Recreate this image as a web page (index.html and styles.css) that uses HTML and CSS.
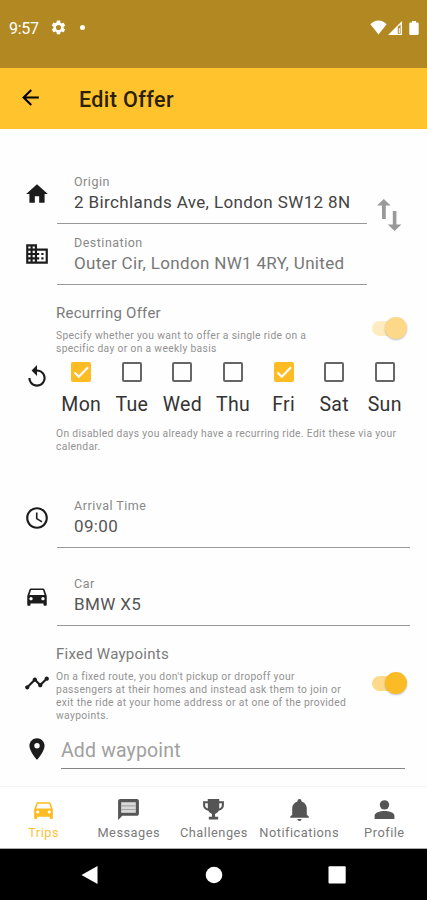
FILE: index.html
```html
<!DOCTYPE html>
<html lang="en">
<head>
  <meta charset="UTF-8" />
  <meta name="viewport" content="width=device-width, initial-scale=1" />
  <title>Edit Offer</title>
  <link rel="stylesheet" href="styles.css">
</head>
<body>

<div class="status-bar">
  <span class="clock">9:57</span>
  <svg class="gear" viewBox="0 0 24 24"><path d="M19.14 12.94c.04-.3.06-.61.06-.94s-.02-.64-.07-.94l2.03-1.58a.49.49 0 0 0 .12-.61l-1.92-3.32a.49.49 0 0 0-.59-.22l-2.39.96a7 7 0 0 0-1.62-.94l-.36-2.54A.48.48 0 0 0 13.92 2h-3.84a.47.47 0 0 0-.47.41l-.36 2.54c-.59.24-1.13.57-1.62.94l-2.39-.96a.48.48 0 0 0-.59.22L2.74 8.87a.48.48 0 0 0 .12.61l2.03 1.58a7 7 0 0 0 0 1.88l-2.03 1.58a.49.49 0 0 0-.12.61l1.92 3.32c.12.22.37.29.59.22l2.39-.96c.5.38 1.03.7 1.62.94l.36 2.54c.05.24.24.41.48.41h3.84c.24 0 .44-.17.47-.41l.36-2.54c.59-.24 1.13-.56 1.62-.94l2.39.96c.22.08.47 0 .59-.22l1.92-3.32a.47.47 0 0 0-.12-.61zM12 15.6a3.6 3.6 0 1 1 0-7.2 3.6 3.6 0 0 1 0 7.2z"/></svg>
  <span class="dot"></span>
  <span class="spacer"></span>
  <svg class="wifi" viewBox="0 0 17 15"><path d="M8.500 14.500L.4 4.200C2.500 1.700 5.400.4 8.500.4s6 1.300 8.100 3.800z"/></svg>
  <svg class="signal" viewBox="0 0 14 14"><path fill-rule="evenodd" d="M14 0v14H0zM9.800 6v6.800h2.800V3.500z"/><path d="M10.800 7h1v5h-1z"/></svg>
  <svg class="battery" viewBox="0 0 10 14"><path d="M3 0h4v1.500h1.500A1.200 1.200 0 0 1 9.700 2.700v10.100a1.200 1.200 0 0 1-1.200 1.200h-7A1.200 1.200 0 0 1 .3 12.800V2.700a1.200 1.200 0 0 1 1.200-1.200H3z"/></svg>
</div>

<header class="app-bar">
  <svg class="back" viewBox="0 0 24 24"><path d="M20 11H7.830l5.590-5.590L12 4l-8 8 8 8 1.410-1.410L7.830 13H20z"/></svg>
  <h1>Edit Offer</h1>
</header>

<main>
  <section class="route">
    <div class="route-fields">
      <div class="row origin">
        <svg class="icon" viewBox="0 0 24 24"><path d="M10 20v-6h4v6h5v-8h3L12 3 2 12h3v8z"/></svg>
        <div class="field">
          <span class="label">Origin</span>
          <span class="value">2 Birchlands Ave, London SW12 8N</span>
        </div>
      </div>
      <div class="row destination">
        <svg class="icon" viewBox="0 0 24 24"><path d="M12 7V3H2v18h20V7zM6 19H4v-2h2zm0-4H4v-2h2zm0-4H4V9h2zm0-4H4V5h2zm4 12H8v-2h2zm0-4H8v-2h2zm0-4H8V9h2zm0-4H8V5h2zm10 12h-8v-2h2v-2h-2v-2h2v-2h-2V9h8zm-2-8h-2v2h2zm0 4h-2v2h2z"/></svg>
        <div class="field">
          <span class="label">Destination</span>
          <span class="value">Outer Cir, London NW1 4RY, United</span>
        </div>
      </div>
    </div>
    <svg class="swap" viewBox="0 0 24 32"><path d="M5 20V6.500H0L6.800 0l6.800 6.500H8.800V20zM15.800 12v13.500h-5L17.600 32l6.800-6.500h-5V12z"/></svg>
  </section>

  <section class="row recurring">
    <svg class="icon" viewBox="0 0 24 24"><path d="M12 5V1L7 6l5 5V7c3.310 0 6 2.690 6 6s-2.690 6-6 6-6-2.690-6-6H4c0 4.420 3.580 8 8 8s8-3.580 8-8-3.580-8-8-8z"/></svg>
    <div class="body">
      <div class="option">
        <div class="option-text">
          <h2>Recurring Offer</h2>
          <p>Specify whether you want to offer a single ride on a<br>specific day or on a weekly basis</p>
        </div>
        <span class="switch disabled"></span>
      </div>
      <div class="days">
        <div class="day"><span class="box checked"><svg viewBox="0 0 20 20"><path d="M3.500 10.500l4.300 4.300L17 5.200"/></svg></span>Mon</div>
        <div class="day"><span class="box"></span>Tue</div>
        <div class="day"><span class="box"></span>Wed</div>
        <div class="day"><span class="box"></span>Thu</div>
        <div class="day"><span class="box checked"><svg viewBox="0 0 20 20"><path d="M3.500 10.500l4.300 4.300L17 5.200"/></svg></span>Fri</div>
        <div class="day"><span class="box"></span>Sat</div>
        <div class="day"><span class="box"></span>Sun</div>
      </div>
      <p class="hint">On disabled days you already have a recurring ride. Edit these via your<br>calendar.</p>
    </div>
  </section>

  <section class="row arrival">
    <svg class="icon" viewBox="0 0 24 24"><path d="M11.990 2C6.470 2 2 6.480 2 12s4.470 10 9.990 10C17.520 22 22 17.520 22 12S17.520 2 11.990 2zM12 20c-4.420 0-8-3.580-8-8s3.580-8 8-8 8 3.580 8 8-3.580 8-8 8zm.5-13H11v6l5.250 3.150.75-1.230-4.500-2.670z"/></svg>
    <div class="field">
      <span class="label">Arrival Time</span>
      <span class="value">09:00</span>
    </div>
  </section>

  <section class="row car">
    <svg class="icon" viewBox="0 0 24 24"><path d="M18.920 6.010C18.720 5.420 18.160 5 17.500 5h-11c-.66 0-1.210.42-1.420 1.010L3 12v8c0 .55.45 1 1 1h1c.55 0 1-.45 1-1v-1h12v1c0 .55.45 1 1 1h1c.55 0 1-.45 1-1v-8zM6.500 16c-.83 0-1.500-.67-1.500-1.500S5.670 13 6.500 13s1.500.67 1.500 1.500S7.330 16 6.500 16zm11 0c-.83 0-1.500-.67-1.500-1.500s.67-1.500 1.500-1.500 1.500.67 1.500 1.500-.67 1.500-1.500 1.500zM5 11l1.500-4.500h11L19 11z"/></svg>
    <div class="field">
      <span class="label">Car</span>
      <span class="value">BMW X5</span>
    </div>
  </section>

  <section class="row fixed">
    <svg class="icon" viewBox="0 0 24 24"><path d="M23 8c0 1.100-.9 2-2 2-.18 0-.35-.02-.51-.07l-3.560 3.550c.05.16.07.34.07.52 0 1.100-.9 2-2 2s-2-.9-2-2c0-.18.02-.36.07-.52l-2.550-2.550c-.16.05-.34.07-.52.07s-.36-.02-.52-.07l-4.550 4.560c.05.16.07.33.07.51 0 1.100-.9 2-2 2s-2-.9-2-2 .9-2 2-2c.18 0 .35.02.51.07l4.560-4.550C8.020 9.360 8 9.180 8 9c0-1.100.9-2 2-2s2 .9 2 2c0 .18-.02.36-.07.52l2.550 2.550c.16-.05.34-.07.52-.07s.36.02.52.07l3.550-3.560C19.020 8.350 19 8.180 19 8c0-1.100.9-2 2-2s2 .9 2 2z"/></svg>
    <div class="body option">
      <div class="option-text">
        <h2>Fixed Waypoints</h2>
        <p>On a fixed route, you don't pickup or dropoff your<br>passengers at their homes and instead ask them to join or<br>exit the ride at your home address or at one of the provided<br>waypoints.</p>
      </div>
      <span class="switch"></span>
    </div>
  </section>

  <section class="row waypoint">
    <svg class="icon" viewBox="0 0 24 24"><path d="M12 2C8.130 2 5 5.130 5 9c0 5.250 7 13 7 13s7-7.750 7-13c0-3.870-3.130-7-7-7zm0 9.500a2.500 2.500 0 0 1 0-5 2.500 2.500 0 0 1 0 5z"/></svg>
    <div class="add">Add waypoint</div>
  </section>
</main>

<nav class="tabs">
  <div class="tab active">
    <svg viewBox="0 0 24 24"><path d="M18.920 6.010C18.720 5.420 18.160 5 17.500 5h-11c-.66 0-1.210.42-1.420 1.010L3 12v8c0 .55.45 1 1 1h1c.55 0 1-.45 1-1v-1h12v1c0 .55.45 1 1 1h1c.55 0 1-.45 1-1v-8zM6.500 16c-.83 0-1.500-.67-1.500-1.500S5.670 13 6.500 13s1.500.67 1.500 1.500S7.330 16 6.500 16zm11 0c-.83 0-1.500-.67-1.500-1.500s.67-1.500 1.500-1.500 1.500.67 1.500 1.500-.67 1.500-1.500 1.500zM5 11l1.500-4.500h11L19 11z"/></svg>
    <span>Trips</span>
  </div>
  <div class="tab">
    <svg viewBox="0 0 24 24"><path class="tint" d="M5 5h14v10H5z"/><path d="M20 2H4c-1.100 0-2 .9-2 2v18l4-4h14c1.100 0 2-.9 2-2V4c0-1.100-.9-2-2-2zM5 5h14v10H5z" fill-rule="evenodd"/><path class="line" d="M5 8h14v1H5zm0 3.500h14v1H5z"/></svg>
    <span>Messages</span>
  </div>
  <div class="tab">
    <svg viewBox="0 0 24 24"><path d="M17.500 4V2h-11v2H2v4c0 2.700 2 4.800 5 5.300.8 1.500 2 2.500 3.500 2.900V19H7.500v2.500h9V19h-3v-2.800c1.500-.4 2.700-1.400 3.500-2.900 3-.5 5-2.600 5-5.300V4zM4 8V6h2.500v5C5 10.500 4 9.500 4 8zm16 0c0 1.500-1 2.500-2.500 3V6H20z"/></svg>
    <span>Challenges</span>
  </div>
  <div class="tab">
    <svg viewBox="0 0 24 24"><path d="M21 19v1H3v-1l2-2v-6c0-3.100 2.030-5.830 5-6.710V4a2 2 0 0 1 4 0v.29c2.970.88 5 3.610 5 6.710v6zm-7 2a2 2 0 0 1-4 0"/></svg>
    <span>Notifications</span>
  </div>
  <div class="tab">
    <svg viewBox="0 0 24 24"><circle cx="12" cy="7.500" r="4.500"/><path d="M2.500 21v-3c0-3 5-4.500 9.500-4.500s9.500 1.500 9.500 4.500v3z"/></svg>
    <span>Profile</span>
  </div>
</nav>

<footer class="system-nav">
  <svg viewBox="0 0 20 20"><path d="M17.500 1v18L1.500 10z"/></svg>
  <svg viewBox="0 0 20 20"><circle cx="10" cy="10" r="8.300"/></svg>
  <svg viewBox="0 0 20 20"><rect x="1.500" y="1.300" width="17.200" height="17.200" rx="1"/></svg>
</footer>

</body>
</html>
```
FILE: styles.css
```css
* {
  box-sizing: border-box;
}

body {
  margin: 0;
  height: 900px;
  display: flex;
  flex-direction: column;
  overflow: hidden;
  font-family: Roboto, "Liberation Sans", sans-serif;
  background: #fefefe;
  color: #333;
}

h1, h2, p {
  margin: 0;
  font-weight: 400;
}

svg {
  display: block;
  flex: none;
}

/* top bars */
.status-bar {
  height: 68px;
  padding: 0 8px 13px 9px;
  display: flex;
  align-items: center;
  background: #b28822;
  color: #fff;
  fill: #fff;
}

.clock {
  width: 41px;
  padding-top: 1px;
  font-size: 16px;
  letter-spacing: -0.3px;
}

.gear {
  width: 17px;
  height: 17px;
}

.dot {
  width: 5px;
  height: 5px;
  margin-left: 13px;
  border-radius: 50%;
  background: #fff;
}

.spacer {
  flex: 1;
}

.wifi {
  width: 17px;
  height: 15px;
}

.signal {
  width: 14px;
  height: 14px;
  margin-left: 1px;
}

.battery {
  width: 10px;
  height: 14px;
  margin-left: 7px;
}

.app-bar {
  height: 61px;
  padding-left: 18px;
  display: flex;
  align-items: center;
  background: #ffc32d;
}

.back {
  width: 25px;
  height: 25px;
  margin-top: -3px;
}

h1 {
  margin-left: 36px;
  padding-top: 1px;
  font-size: 21.5px;
  font-weight: 500;
  letter-spacing: 0.4px;
  color: #2a2006;
}

/* form */
main {
  flex: 1;
  padding-top: 41px;
}

.row {
  display: flex;
  padding-left: 24px;
}

.icon {
  width: 26px;
  height: 26px;
  margin-right: 7px;
  fill: #1c1c1c;
}

.field {
  flex: 1;
  height: 54px;
  padding: 4px 0 0 17px;
  display: flex;
  flex-direction: column;
  white-space: nowrap;
  border-bottom: 1px solid #999;
}

.label {
  font-size: 12.5px;
  line-height: 16px;
  letter-spacing: 0.5px;
  color: #888;
}

.value {
  margin-top: 1px;
  font-size: 17px;
  line-height: 22px;
  letter-spacing: 0.38px;
  color: #555;
}

.route {
  display: flex;
}

.route-fields {
  width: 367px;
}

.origin .icon {
  margin-top: 11px;
}

.origin .value {
  color: #444;
}

.destination {
  padding-top: 7px;
}

.destination .icon {
  margin-top: 10px;
}

.destination .value {
  letter-spacing: 0.33px;
  color: #777;
}

.swap {
  width: 24px;
  height: 32px;
  margin: 29px 0 0 10px;
  overflow: visible;
  fill: #999;
}

.recurring {
  padding-top: 18px;
}

.recurring .icon {
  margin-top: 61px;
}

.body {
  width: 354px;
}

.option {
  display: flex;
  justify-content: space-between;
}

h2 {
  margin-left: -1px;
  font-size: 15px;
  line-height: 20px;
  letter-spacing: 0.25px;
  color: #7a7a7a;
}

.option p,
.hint {
  margin-left: -1px;
  font-size: 10.3px;
  line-height: 13px;
  letter-spacing: 0.33px;
  color: #929292;
  white-space: nowrap;
}

.option p {
  margin-top: 6px;
}

.switch {
  width: 35px;
  height: 24px;
  margin: 13px 4px 0 0;
  display: flex;
  align-items: center;
  justify-content: flex-end;
}

.switch::before {
  content: "";
  width: 24px;
  height: 15px;
  margin-right: -11px;
  border-radius: 8px;
  background: #fed98a;
}

.switch::after {
  content: "";
  width: 22px;
  height: 22px;
  border-radius: 50%;
  background: #fbbb24;
  box-shadow: 0 1px 2px rgba(0, 0, 0, 0.25);
}

.switch.disabled::before {
  background: #feebc0;
}

.switch.disabled::after {
  background: #fdd888;
}

.days {
  display: grid;
  grid-template-columns: repeat(7, 1fr);
  margin: 7px 1px 0 -1px;
}

.day {
  display: flex;
  flex-direction: column;
  align-items: center;
  font-size: 19.5px;
  line-height: 24px;
  letter-spacing: 0.3px;
}

.box {
  width: 20px;
  height: 20px;
  margin-bottom: 11px;
  border: 2px solid #666;
  border-radius: 2px;
}

.box.checked {
  border: 0;
  background: #fdbc23;
}

.box path {
  fill: none;
  stroke: #fff;
  stroke-width: 2.2;
}

.hint {
  margin-top: 10px;
}

.arrival {
  padding-top: 41px;
}

.arrival .icon,
.car .icon {
  margin-top: 11px;
}

.arrival .field,
.car .field {
  flex: none;
  width: 353px;
}

.car {
  padding-top: 24px;
}

.fixed {
  padding-top: 18px;
}

.fixed .icon {
  margin-top: 26px;
}

.fixed p {
  letter-spacing: 0.35px;
}

.fixed .switch {
  margin-top: 27px;
}

.waypoint {
  padding-top: 10px;
}

.waypoint .icon {
  margin: 4px 11px 0 0;
}

.add {
  width: 344px;
  height: 37px;
  line-height: 37px;
  font-size: 19.5px;
  letter-spacing: 0.15px;
  color: #a0a0a0;
  border-bottom: 1px solid #858585;
}

/* bottom bars */
.tabs {
  height: 63px;
  padding-left: 1px;
  display: grid;
  grid-template-columns: repeat(5, 1fr);
  background: #fff;
  border-top: 1px solid #f5f5f5;
  border-bottom: 1px solid #aaa;
}

.tab {
  display: flex;
  flex-direction: column;
  align-items: center;
  min-width: 0;
  padding-top: 10px;
  font-size: 12.8px;
  line-height: 18px;
  letter-spacing: 0.5px;
  color: #7a7a7a;
  fill: #555;
}

.tab svg {
  width: 25px;
  height: 25px;
  margin-bottom: 2px;
}

.tab.active {
  color: #fdc23c;
  fill: #fdbc23;
}

.tint {
  fill: #d8d8d8;
}

.line {
  fill: #a5a5a5;
}

.system-nav {
  height: 51px;
  padding: 0 80px;
  display: flex;
  align-items: center;
  justify-content: space-between;
  background: #000;
  fill: #fff;
}

.system-nav svg {
  width: 20px;
  height: 20px;
}
```
